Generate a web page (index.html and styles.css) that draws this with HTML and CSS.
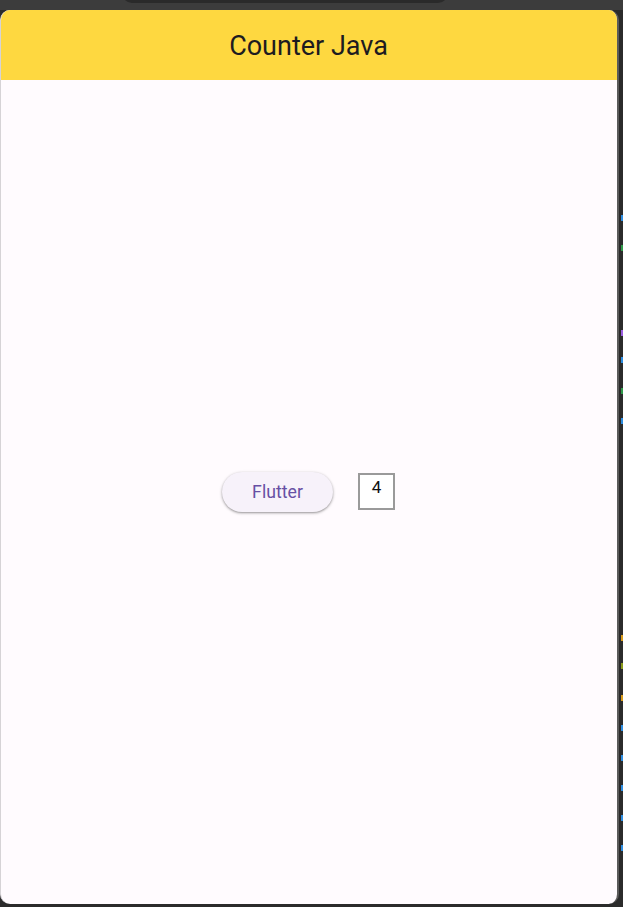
FILE: index.html
```html
<!DOCTYPE html>
<html>
<head>
<meta charset="utf-8">
<link rel="stylesheet" href="styles.css">
</head>
<body>
<div class="notch"></div>
<div class="frame">
  <div class="card">
    <header class="appbar"><h1 class="title">Counter Java</h1></header>
    <main class="content">
      <div class="row">
        <button class="btn">Flutter</button>
        <div class="count">4</div>
      </div>
    </main>
  </div>
  <div class="strip">
    <span class="mark blue" style="top:205px"></span>
    <span class="mark green" style="top:235px"></span>
    <span class="mark purple" style="top:320px"></span>
    <span class="mark blue" style="top:347px"></span>
    <span class="mark green" style="top:378px"></span>
    <span class="mark blue" style="top:408px"></span>
    <span class="mark orange" style="top:625px"></span>
    <span class="mark olive" style="top:653px"></span>
    <span class="mark orange" style="top:685px"></span>
    <span class="mark blue" style="top:715px"></span>
    <span class="mark blue" style="top:745px"></span>
    <span class="mark blue" style="top:775px"></span>
    <span class="mark blue" style="top:805px"></span>
    <span class="mark blue" style="top:835px"></span>
  </div>
</div>
</body>
</html>
```
FILE: styles.css
```css
html, body {
  margin: 0;
  padding: 0;
}
body {
  width: 623px;
  height: 907px;
  overflow: hidden;
  background: #2b2b2b;
  position: relative;
  font-family: Roboto, "Noto Sans", sans-serif;
}
.notch {
  position: absolute;
  left: 122px;
  top: -10px;
  width: 326px;
  height: 13px;
  background: #2a2a2a;
  border-radius: 0 0 10px 10px;
  z-index: 2;
}
.frame {
  display: flex;
  background: linear-gradient(#3c3c3c 0, #3c3c3c 10px, transparent 10px);
  padding-top: 10px;
  height: 894px;
}
.card {
  width: 619px;
  height: 894px;
  flex: none;
  box-sizing: border-box;
  border-left: 1px solid #d6d3d6;
  border-right: 2px solid #5a5a5a;
  border-radius: 10px;
  background: #fffbfe;
  overflow: hidden;
  display: flex;
  flex-direction: column;
}
.appbar {
  height: 70px;
  flex: none;
  background: #fed840;
  display: flex;
  align-items: center;
  justify-content: center;
}
.title {
  margin: 0;
  font-weight: 400;
  font-size: 27px;
  color: #1d1b20;
  padding-top: 1px;
  margin-right: 1px;
}
.content {
  flex: 1;
  display: flex;
  align-items: center;
  justify-content: center;
}
.row {
  display: flex;
  align-items: center;
  gap: 25px;
  margin-right: 1px;
}
.btn {
  width: 111px;
  height: 40px;
  border: none;
  border-radius: 20px;
  background: #f7f2fa;
  color: #6750a4;
  font-family: Roboto, sans-serif;
  font-size: 17.7px;
  box-shadow: 0 1px 2px rgba(0,0,0,0.3), 0 1px 3px 1px rgba(0,0,0,0.1);
  padding: 0;
}
.count {
  width: 37px;
  height: 37px;
  box-sizing: border-box;
  border: 2px solid #9a9a9a;
  background: #fff;
  font-family: Roboto, sans-serif;
  font-size: 17px;
  color: #111;
  text-align: center;
  line-height: 24px;
  margin-top: -1px;
}
.strip {
  position: relative;
  flex: none;
  width: 4px;
  background: #2b2b2b;
}
.mark {
  position: absolute;
  left: 2px;
  width: 2px;
  height: 6px;
}
.blue { background: #2d8de0; }
.green { background: #2f9a4a; }
.purple { background: #9b5ee0; }
.orange { background: #d79a1a; }
.olive { background: #8a9a1a; }
```
